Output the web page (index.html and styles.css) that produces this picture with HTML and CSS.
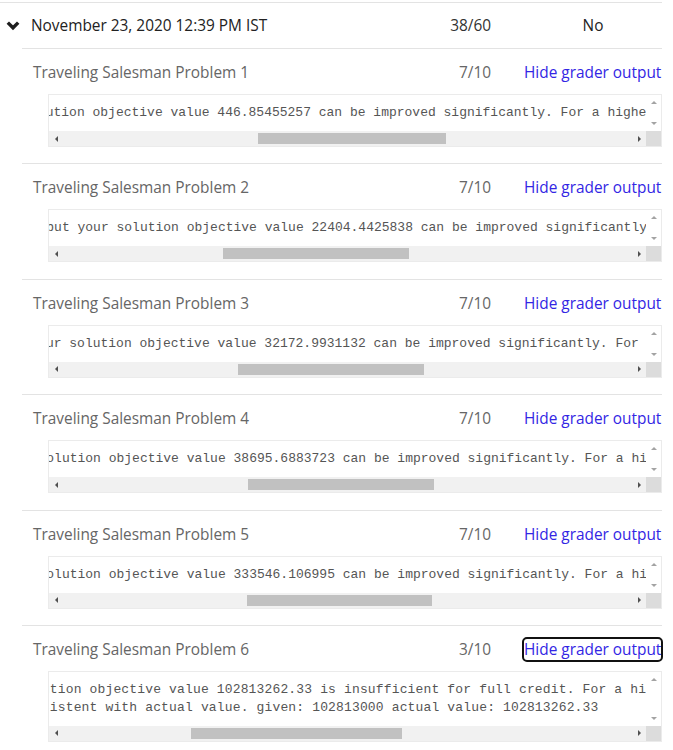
FILE: index.html
```html
<!DOCTYPE html>
<html>
<head>
<meta charset="utf-8">
<link rel="stylesheet" href="styles.css">
</head>
<body>
<div class="submission">
  <div class="sub-head">
    <div class="date"><svg class="chev" width="14" height="10" viewBox="0 0 14 10"><polyline points="1.8,1.6 7,6.8 12.2,1.6" fill="none" stroke="#1e1e1e" stroke-width="3.4"/></svg><span>November 23, 2020 12:39 PM IST</span></div>
    <div class="score">38/60</div>
    <div class="status">No</div>
  </div>
  <div class="parts">
    <div class="part">
      <div class="part-head">
        <div class="part-name">Traveling Salesman Problem 1</div>
        <div class="score">7/10</div>
        <div class="action"><a href="#" class="toggle">Hide grader output</a></div>
      </div>
      <div class="outbox">
        <pre class="output" data-marker="tion objective value 446" data-offset="3.5">Grader output for part 1, tsp1: Your solution output is correct, but your solution objective value 446.85455257 can be improved significantly. For a higher grade, you will need to improve the objective value to 430 or better.    </pre>
        <div class="vbar"><span class="btn"><i class="tri up"></i></span><span class="btn"><i class="tri down"></i></span></div>
        <div class="hbar"><span class="btn"><i class="tri left"></i></span><div class="track"><div class="thumb" style="margin-left:194px;width:188px"></div></div><span class="btn"><i class="tri right"></i></span></div>
        <div class="corner"></div>
      </div>
    </div>
    <div class="part">
      <div class="part-head">
        <div class="part-name">Traveling Salesman Problem 2</div>
        <div class="score">7/10</div>
        <div class="action"><a href="#" class="toggle">Hide grader output</a></div>
      </div>
      <div class="outbox">
        <pre class="output" data-marker="ut your solution objective value 22404" data-offset="5">Grader output for part 2, tsp: Your solution output is correct, but your solution objective value 22404.4425838 can be improved significantly. For a higher grade, you will need to improve the objective value to 20800 or better.    </pre>
        <div class="vbar"><span class="btn"><i class="tri up"></i></span><span class="btn"><i class="tri down"></i></span></div>
        <div class="hbar"><span class="btn"><i class="tri left"></i></span><div class="track"><div class="thumb" style="margin-left:159px;width:186px"></div></div><span class="btn"><i class="tri right"></i></span></div>
        <div class="corner"></div>
      </div>
    </div>
    <div class="part">
      <div class="part-head">
        <div class="part-name">Traveling Salesman Problem 3</div>
        <div class="score">7/10</div>
        <div class="action"><a href="#" class="toggle">Hide grader output</a></div>
      </div>
      <div class="outbox">
        <pre class="output" data-marker="r solution objective value 32172" data-offset="4.5">Grader output for part 3, tsp3: Your solution output is correct, but your solution objective value 32172.9931132 can be improved significantly. For a higher grade, you will need to improve the objective value to 30000 or better.   </pre>
        <div class="vbar"><span class="btn"><i class="tri up"></i></span><span class="btn"><i class="tri down"></i></span></div>
        <div class="hbar"><span class="btn"><i class="tri left"></i></span><div class="track"><div class="thumb" style="margin-left:174px;width:186px"></div></div><span class="btn"><i class="tri right"></i></span></div>
        <div class="corner"></div>
      </div>
    </div>
    <div class="part">
      <div class="part-head">
        <div class="part-name">Traveling Salesman Problem 4</div>
        <div class="score">7/10</div>
        <div class="action"><a href="#" class="toggle">Hide grader output</a></div>
      </div>
      <div class="outbox">
        <pre class="output" data-marker="lution objective value 38695" data-offset="5">Grader output for part 4, tsp: Your solution output is correct, but your solution objective value 38695.6883723 can be improved significantly. For a higher grade, you will need to improve the objective value to 37600 or better.    </pre>
        <div class="vbar"><span class="btn"><i class="tri up"></i></span><span class="btn"><i class="tri down"></i></span></div>
        <div class="hbar"><span class="btn"><i class="tri left"></i></span><div class="track"><div class="thumb" style="margin-left:184px;width:186px"></div></div><span class="btn"><i class="tri right"></i></span></div>
        <div class="corner"></div>
      </div>
    </div>
    <div class="part">
      <div class="part-head">
        <div class="part-name">Traveling Salesman Problem 5</div>
        <div class="score">7/10</div>
        <div class="action"><a href="#" class="toggle">Hide grader output</a></div>
      </div>
      <div class="outbox">
        <pre class="output" data-marker="lution objective value 333546" data-offset="5">Grader output for part 5, tsp: Your solution output is correct, but your solution objective value 333546.106995 can be improved significantly. For a higher grade, you will need to improve the objective value to 323000 or better.   </pre>
        <div class="vbar"><span class="btn"><i class="tri up"></i></span><span class="btn"><i class="tri down"></i></span></div>
        <div class="hbar"><span class="btn"><i class="tri left"></i></span><div class="track"><div class="thumb" style="margin-left:183px;width:185px"></div></div><span class="btn"><i class="tri right"></i></span></div>
        <div class="corner"></div>
      </div>
    </div>
    <div class="part">
      <div class="part-head">
        <div class="part-name">Traveling Salesman Problem 6</div>
        <div class="score">3/10</div>
        <div class="action"><a href="#" class="toggle focused">Hide grader output</a></div>
      </div>
      <div class="outbox">
        <pre class="output wide" data-marker="tion objective value 102813262" data-offset="0">Your solution output is correct but your solution objective value 102813262.33 is insufficient for full credit. For a higher grade, you will need to improve the objective value to 78478868 or better.     
note: the submitted objective value is inconsistent with actual value. given: 102813000 actual value: 102813262.33</pre>
        <div class="vbar"><span class="btn"><i class="tri up"></i></span><span class="btn"><i class="tri down"></i></span></div>
        <div class="hbar"><span class="btn"><i class="tri left"></i></span><div class="track"><div class="thumb" style="margin-left:127px;width:211px"></div></div><span class="btn"><i class="tri right"></i></span></div>
        <div class="corner"></div>
      </div>
    </div>
  </div>
</div>
<script src="script.js"></script>
</body>
</html>
```

FILE: styles.css
```css
html {
  overflow: hidden;
}
body {
  margin: 0;
  font-family: "Open Sans", "Liberation Sans", sans-serif;
  font-size: 15.4px;
  line-height: 24px;
  color: #222;
  background: #fff;
}
.submission {
  margin: 2px 11px 0 0;
  border-top: 1px solid #e3e3e3;
}
.sub-head,
.part-head {
  display: grid;
  grid-template-columns: 1fr 60px 138px;
  column-gap: 33px;
  align-items: center;
}
.sub-head {
  padding: 11px 0 10px;
}
.date {
  display: flex;
  align-items: center;
  gap: 11px;
  padding-left: 6px;
  color: #222;
}
.chev {
  display: block;
}
.score {
  text-align: right;
  color: #333;
}
.status {
  text-align: center;
  color: #222;
}
.parts {
  margin-left: 22px;
}
.part {
  border-top: 1px solid #e3e3e3;
  padding-bottom: 16.4px;
}
.part-head {
  padding: 12px 0 9px;
}
.part-name {
  padding-left: 11px;
  color: #666;
}
.part-head .score {
  color: #666;
}
.toggle {
  color: #3326e4;
  text-decoration: none;
  white-space: nowrap;
}
.toggle.focused {
  outline: 2px solid #111;
  outline-offset: 0;
  border-radius: 3px;
}
.outbox {
  margin-left: 26px;
  border: 1px solid #ebebeb;
  display: grid;
  grid-template-columns: 1fr 15px;
  grid-template-rows: auto 15px;
  background: #fff;
}
.output {
  margin: 0;
  padding: 9px;
  font-family: "Liberation Mono", monospace;
  font-size: 13px;
  line-height: 18px;
  color: #555;
  overflow: hidden;
  white-space: pre;
  min-width: 0;
}
.output.wide {
  letter-spacing: 0.15px;
}
.vbar {
  display: flex;
  flex-direction: column;
  justify-content: space-between;
  background: #fff;
}
.hbar {
  display: flex;
  background: #f1f1f1;
  min-width: 0;
}
.corner {
  background: #dcdcdc;
}
.btn {
  flex: 0 0 15px;
  width: 15px;
  height: 15px;
  display: flex;
  align-items: center;
  justify-content: center;
}
.track {
  flex: 1;
  display: flex;
  align-items: center;
}
.thumb {
  height: 11px;
  background: #c1c1c1;
}
.tri {
  display: block;
  width: 0;
  height: 0;
}
.tri.up {
  border-left: 3.5px solid transparent;
  border-right: 3.5px solid transparent;
  border-bottom: 3.5px solid #a3a3a3;
}
.tri.down {
  border-left: 3.5px solid transparent;
  border-right: 3.5px solid transparent;
  border-top: 3.5px solid #a3a3a3;
}
.tri.left {
  border-top: 3.5px solid transparent;
  border-bottom: 3.5px solid transparent;
  border-right: 3.5px solid #505050;
  margin-left: -1px;
}
.tri.right {
  border-top: 3.5px solid transparent;
  border-bottom: 3.5px solid transparent;
  border-left: 3.5px solid #505050;
  margin-left: 1px;
}
```

FILE: script.js
```js
document.querySelectorAll('.output').forEach(function (pre) {
  var text = pre.textContent;
  var idx = text.indexOf(pre.dataset.marker);
  var range = document.createRange();
  range.setStart(pre.firstChild, idx);
  range.setEnd(pre.firstChild, idx + 1);
  pre.scrollLeft = 0;
  var target = pre.getBoundingClientRect().left + parseFloat(pre.dataset.offset);
  var current = range.getBoundingClientRect().left;
  pre.scrollLeft = Math.floor(current - target);
});
```
